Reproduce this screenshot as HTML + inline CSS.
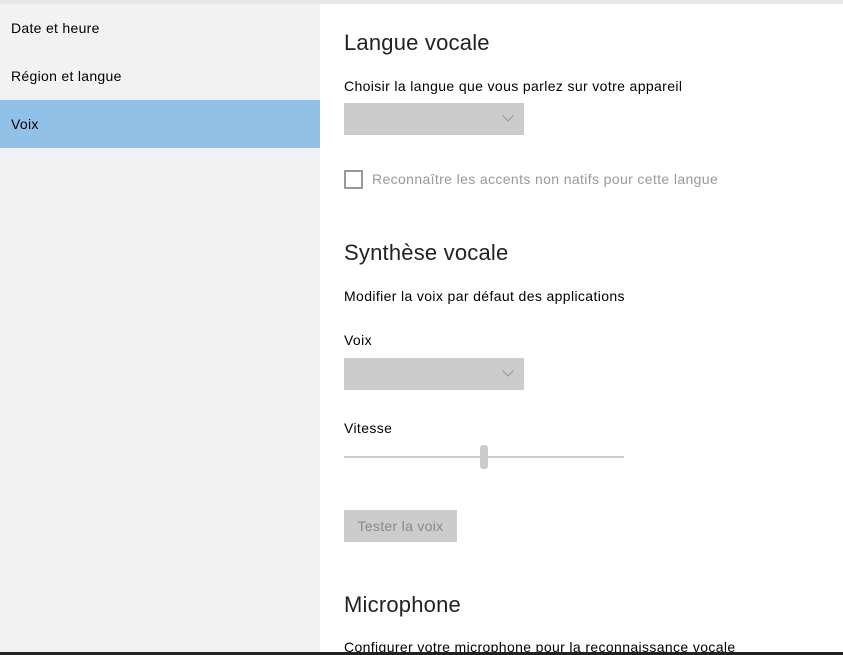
<!DOCTYPE html>
<html><head><meta charset="utf-8"><style>
*{margin:0;padding:0;box-sizing:border-box}
body{width:843px;height:655px;overflow:hidden;background:#fff;font-family:"Liberation Sans",sans-serif;color:#000;position:relative}
.top{position:absolute;left:0;top:0;width:843px;height:4px;background:#e6e6e6}
.side{position:absolute;left:0;top:4px;width:320px;height:651px;background:#f2f2f2}
.it{position:absolute;left:11px;font-size:14px;letter-spacing:0.3px}
.sel{position:absolute;left:0;top:100px;width:320px;height:48px;background:#91c1e7}
.t{position:absolute;left:344px;white-space:nowrap}
.s{font-size:14px;letter-spacing:0.37px}
.dd{position:absolute;left:344px;width:180px;height:32px;background:#cccccc}
.dd svg{position:absolute;right:10px;top:12px}
.bot{position:absolute;left:0;top:652px;width:843px;height:3px;background:#222}
</style></head><body>
<div class="top"></div>
<div class="side"></div>
<div class="sel"></div>
<div class="it" style="top:20px">Date et heure</div>
<div class="it" style="top:68px">Région et langue</div>
<div class="it" style="top:116px">Voix</div>

<div class="t" style="top:30px;font-size:22px;color:#222;letter-spacing:0.2px">Langue vocale</div>
<div class="t s" style="top:78px">Choisir la langue que vous parlez sur votre appareil</div>
<div class="dd" style="top:103px"><svg width="12" height="7"><path d="M0.5 0.5 L6 6 L11.5 0.5" stroke="#999" fill="none"/></svg></div>
<div style="position:absolute;left:344px;top:170px;width:19px;height:19px;border:2px solid #999"></div>
<div class="t s" style="left:372px;top:171px;color:#999">Reconnaître les accents non natifs pour cette langue</div>

<div class="t" style="top:240px;font-size:22px;color:#222;letter-spacing:0.2px">Synthèse vocale</div>
<div class="t s" style="top:288px">Modifier la voix par défaut des applications</div>
<div class="t s" style="top:332px">Voix</div>
<div class="dd" style="top:358px"><svg width="12" height="7"><path d="M0.5 0.5 L6 6 L11.5 0.5" stroke="#999" fill="none"/></svg></div>
<div class="t s" style="top:420px">Vitesse</div>
<div style="position:absolute;left:344px;top:456px;width:280px;height:2px;background:#ccc"></div>
<div style="position:absolute;left:480px;top:445px;width:8px;height:24px;border-radius:3px;background:#ccc"></div>
<div style="position:absolute;left:344px;top:510px;width:113px;height:32px;background:#ccc;color:#888;font-size:14px;letter-spacing:0.3px;text-align:center;line-height:32px">Tester la voix</div>

<div class="t" style="top:592px;font-size:22px;color:#222;letter-spacing:0.2px">Microphone</div>
<div class="t s" style="top:639px">Configurer votre microphone pour la reconnaissance vocale</div>
<div class="bot"></div>
</body></html>
